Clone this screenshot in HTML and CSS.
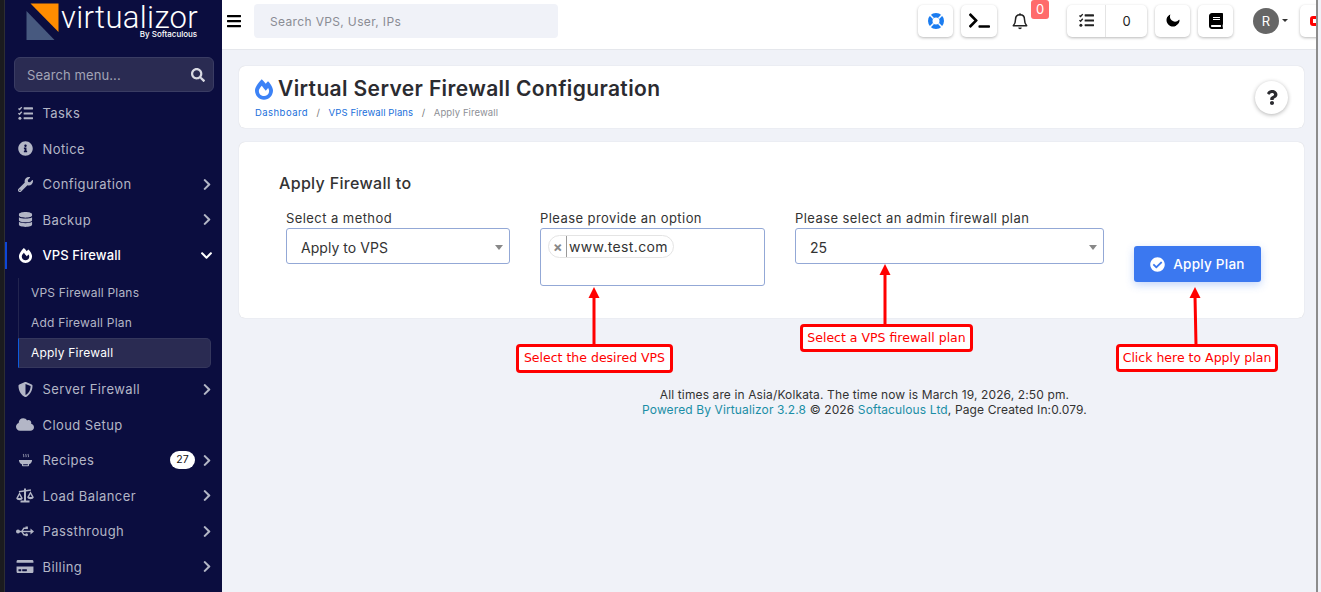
FILE: index.html
```html
<!DOCTYPE html>
<html lang="en">

<head>
    <meta charset="UTF-8">
    <meta name="viewport" content="width=device-width, initial-scale=1.0">
    <title>Virtual Server Firewall Configuration</title>
    <link rel="stylesheet" href="styles.css">
</head>

<body>
    <svg class="sprite" xmlns="http://www.w3.org/2000/svg">
        <symbol id="i-search" viewBox="0 0 512 512"><path d="M505 442.7L405.3 343c-4.5-4.5-10.6-7-17-7H372c27.6-35.3 44-79.7 44-128C416 93.1 322.9 0 208 0S0 93.1 0 208s93.1 208 208 208c48.3 0 92.7-16.4 128-44v16.3c0 6.4 2.5 12.5 7 17l99.7 99.7c9.4 9.4 24.6 9.4 33.9 0l28.3-28.3c9.4-9.4 9.4-24.6.1-34zM208 336c-70.7 0-128-57.2-128-128 0-70.7 57.2-128 128-128 70.7 0 128 57.2 128 128 0 70.7-57.2 128-128 128z"/></symbol>
        <symbol id="i-right" viewBox="0 0 320 512"><path d="M285.476 272.971L91.132 467.314c-9.373 9.373-24.569 9.373-33.941 0l-22.667-22.667c-9.357-9.357-9.375-24.522-.04-33.901L188.505 256 34.484 101.255c-9.335-9.379-9.317-24.544.04-33.901l22.667-22.667c9.373-9.373 24.569-9.373 33.941 0L285.475 239.03c9.373 9.372 9.373 24.568.001 33.941z"/></symbol>
        <symbol id="i-down" viewBox="0 0 448 512"><path d="M207.029 381.476L12.686 187.132c-9.373-9.373-9.373-24.569 0-33.941l22.667-22.667c9.357-9.357 24.522-9.375 33.901-.04L224 284.505l154.745-154.021c9.379-9.335 24.544-9.317 33.901.04l22.667 22.667c9.373 9.373 9.373 24.569 0 33.941L240.971 381.476c-9.373 9.372-24.569 9.372-33.942 0z"/></symbol>
        <symbol id="i-check" viewBox="0 0 512 512"><path d="M504 256c0 136.967-111.033 248-248 248S8 392.967 8 256 119.033 8 256 8s248 111.033 248 248zM227.314 387.314l184-184c6.248-6.248 6.248-16.379 0-22.627l-22.627-22.627c-6.248-6.249-16.379-6.249-22.628 0L216 308.118l-70.059-70.059c-6.248-6.248-16.379-6.248-22.628 0l-22.627 22.627c-6.248 6.248-6.248 16.379 0 22.627l104 104c6.249 6.249 16.379 6.249 22.628.001z"/></symbol>
        <symbol id="i-info" viewBox="0 0 512 512"><path d="M256 8C119.043 8 8 119.083 8 256c0 136.997 111.043 248 248 248s248-111.003 248-248C504 119.083 392.957 8 256 8zm0 110c23.196 0 42 18.804 42 42s-18.804 42-42 42-42-18.804-42-42 18.804-42 42-42zm56 254c0 6.627-5.373 12-12 12h-88c-6.627 0-12-5.373-12-12v-24c0-6.627 5.373-12 12-12h12v-64h-12c-6.627 0-12-5.373-12-12v-24c0-6.627 5.373-12 12-12h64c6.627 0 12 5.373 12 12v100h12c6.627 0 12 5.373 12 12v24z"/></symbol>
        <symbol id="i-wrench" viewBox="0 0 512 512"><path d="M507.73 109.1c-2.24-9.03-13.54-12.09-20.12-5.51l-74.36 74.36-67.88-11.31-11.31-67.88 74.36-74.36c6.62-6.62 3.43-17.9-5.66-20.16-47.38-11.74-99.55.91-136.58 37.93-39.64 39.64-50.55 97.1-34.05 147.2L18.74 402.76c-24.99 24.99-24.99 65.51 0 90.5 24.99 24.99 65.51 24.99 90.5 0l213.21-213.21c50.12 16.71 107.47 5.68 147.37-34.22 37.07-37.07 49.7-89.32 37.91-136.73zM64 472c-13.25 0-24-10.75-24-24 0-13.26 10.75-24 24-24s24 10.74 24 24c0 13.25-10.75 24-24 24z"/></symbol>
        <symbol id="i-database" viewBox="0 0 448 512"><path d="M448 73.143v45.714C448 159.143 347.667 192 224 192S0 159.143 0 118.857V73.143C0 32.857 100.333 0 224 0s224 32.857 224 73.143zM448 176v102.857C448 319.143 347.667 352 224 352S0 319.143 0 278.857V176c48.125 33.143 136.208 48.572 224 48.572S399.874 209.143 448 176zm0 160v102.857C448 479.143 347.667 512 224 512S0 479.143 0 438.857V336c48.125 33.143 136.208 48.572 224 48.572S399.874 369.143 448 336z"/></symbol>
        <symbol id="i-cloud" viewBox="0 0 640 512"><path d="M537.6 226.6c4.1-10.7 6.4-22.4 6.4-34.6 0-53-43-96-96-96-19.7 0-38.1 6-53.3 16.2C367 64.2 315.3 32 256 32c-88.4 0-160 71.6-160 160 0 2.7.1 5.4.2 8.1C40.2 219.8 0 273.2 0 336c0 79.5 64.5 144 144 144h368c70.7 0 128-57.3 128-128 0-61.9-44-113.6-102.4-125.4z"/></symbol>
        <symbol id="i-bars" viewBox="0 0 448 512"><path d="M16 132h416c8.837 0 16-7.163 16-16V76c0-8.837-7.163-16-16-16H16C7.163 60 0 67.163 0 76v40c0 8.837 7.163 16 16 16zm0 160h416c8.837 0 16-7.163 16-16v-40c0-8.837-7.163-16-16-16H16c-8.837 0-16 7.163-16 16v40c0 8.837 7.163 16 16 16zm0 160h416c8.837 0 16-7.163 16-16v-40c0-8.837-7.163-16-16-16H16c-8.837 0-16 7.163-16 16v40c0 8.837 7.163 16 16 16z"/></symbol>
        <symbol id="i-moon" viewBox="0 0 512 512"><path d="M283.211 512c78.962 0 151.079-35.925 198.857-94.792 7.068-8.708-.639-21.43-11.562-19.35-124.203 23.654-238.262-71.576-238.262-196.954 0-72.222 38.662-138.635 101.498-174.394 9.686-5.512 7.25-20.197-3.756-22.23A258.156 258.156 0 0 0 283.211 0c-141.309 0-256 114.511-256 256 0 141.309 114.511 256 256 256z"/></symbol>
        <symbol id="i-question" viewBox="0 0 384 512"><path d="M202.021 0C122.202 0 70.503 32.703 29.914 91.026c-7.363 10.58-5.093 25.086 5.178 32.874l43.138 32.709c10.373 7.865 25.132 6.026 33.253-4.148 25.049-31.381 43.63-49.449 82.757-49.449 30.764 0 68.816 19.799 68.816 49.631 0 22.552-18.617 34.134-48.993 51.164-35.423 19.86-82.299 44.576-82.299 106.405V320c0 13.255 10.745 24 24 24h72.471c13.255 0 24-10.745 24-24v-5.773c0-42.86 125.268-44.645 125.268-160.627C377.504 66.256 286.902 0 202.021 0zM192 373.459c-38.196 0-69.271 31.075-69.271 69.271 0 38.195 31.075 69.27 69.271 69.27s69.271-31.075 69.271-69.271-31.075-69.27-69.271-69.27z"/></symbol>
        <symbol id="i-book" viewBox="0 0 448 512"><path d="M448 360V24c0-13.3-10.7-24-24-24H96C43 0 0 43 0 96v320c0 53 43 96 96 96h328c13.3 0 24-10.7 24-24v-16c0-7.5-3.5-14.3-8.9-18.7-4.2-15.4-4.2-59.3 0-74.7 5.4-4.3 8.9-11.1 8.9-18.6zM128 134c0-3.3 2.7-6 6-6h212c3.3 0 6 2.7 6 6v20c0 3.3-2.7 6-6 6H134c-3.3 0-6-2.7-6-6v-20zm0 64c0-3.3 2.7-6 6-6h212c3.3 0 6 2.7 6 6v20c0 3.3-2.7 6-6 6H134c-3.3 0-6-2.7-6-6v-20zm253.4 250H96c-17.7 0-32-14.3-32-32 0-17.6 14.4-32 32-32h285.4c-1.9 17.1-1.9 46.9 0 64z"/></symbol>
        <symbol id="i-terminal" viewBox="0 0 640 512"><path d="M257.981 272.971L63.638 467.314c-9.373 9.373-24.569 9.373-33.941 0L7.029 444.647c-9.357-9.357-9.375-24.522-.04-33.901L161.011 256 6.99 101.255c-9.335-9.379-9.317-24.544.04-33.901l22.667-22.667c9.373-9.373 24.569-9.373 33.941 0l194.343 194.343c9.372 9.372 9.372 24.568 0 33.941zM640 456v-32c0-13.255-10.745-24-24-24H312c-13.255 0-24 10.745-24 24v32c0 13.255 10.745 24 24 24h304c13.255 0 24-10.745 24-24z"/></symbol>
        <symbol id="i-shield" viewBox="0 0 512 512"><path d="M466.5 83.7l-192-80a48.15 48.15 0 0 0-36.9 0l-192 80C27.7 91.1 16 108.6 16 128c0 198.5 114.5 335.7 221.5 380.3 11.8 4.9 25.1 4.9 36.9 0C360.1 472.6 496 349.3 496 128c0-19.4-11.7-36.9-29.5-44.3zM256.1 446.3l-.1-381 175.9 73.3c-3.3 151.4-82.1 261.1-175.8 307.7z"/></symbol>
        <symbol id="i-fire" viewBox="0 0 448 512"><path d="M323.56 51.2c-20.8 19.3-39.58 39.59-56.22 59.97C240.08 73.62 206.28 35.53 168 0 69.74 91.17 0 209.96 0 281.6 0 408.85 100.29 512 224 512s224-103.15 224-230.4c0-53.27-51.98-163.14-124.44-230.4zm-19.47 340.65C282.43 407.01 255.72 416 226.86 416 154.71 416 96 368.26 96 290.75c0-38.61 24.31-72.63 72.79-130.75 6.93 7.98 98.83 125.34 98.83 125.34l58.63-66.88c4.14 6.85 7.91 13.55 11.27 19.97 27.35 52.19 15.81 118.97-33.43 153.42z"/></symbol>
        <symbol id="i-card" viewBox="0 0 576 512"><path d="M0 432c0 26.5 21.5 48 48 48h480c26.5 0 48-21.5 48-48V256H0v176zm192-68c0-6.6 5.4-12 12-12h136c6.6 0 12 5.4 12 12v40c0 6.6-5.4 12-12 12H204c-6.6 0-12-5.4-12-12v-40zm-128 0c0-6.6 5.4-12 12-12h72c6.6 0 12 5.4 12 12v40c0 6.6-5.4 12-12 12H76c-6.6 0-12-5.4-12-12v-40zM576 80v48H0V80c0-26.5 21.5-48 48-48h480c26.5 0 48 21.5 48 48z"/></symbol>
        <symbol id="i-tasks" viewBox="0 0 16 16"><path d="M0.500 2.600l1.200 1.200 2.300-2.600" fill="none" stroke="currentColor" stroke-width="1.500"/><path d="M0.500 7.600l1.200 1.200 2.300-2.600" fill="none" stroke="currentColor" stroke-width="1.500"/><circle cx="2" cy="13" r="1.600"/><rect x="6" y="1.400" width="10" height="2.200" rx=".4"/><rect x="6" y="6.900" width="10" height="2.200" rx=".4"/><rect x="6" y="11.900" width="10" height="2.200" rx=".4"/></symbol>
        <symbol id="i-bowl" viewBox="0 0 16 16"><path d="M1 7.500h14c0 2.400-1.400 3.900-3.200 4.600v.9a1 1 0 0 1-1 1H5.200a1 1 0 0 1-1-1v-.9C2.400 11.400 1 9.900 1 7.500zM5.500 12v1h5v-1z" fill-rule="evenodd"/><path d="M6 1c-.8 1.200.8 1.800 0 3.400M8.500 1c-.8 1.200.8 1.800 0 3.400M11 1c-.8 1.200.8 1.800 0 3.400" fill="none" stroke="currentColor" stroke-width=".9"/></symbol>
        <symbol id="i-scale" viewBox="0 0 18 15"><path d="M8 .5h2v1.400l4.800-.6.2 1.400-5 .7V12.500h3.500V14.500H4.500V12.500H8V3.700L3 4.400l-.2-1.400L8 2.200z"/><path d="M3.500 4.300L.2 10.300c.3 1.300 1.700 2 3.300 2s3-.7 3.300-2zM3.500 7L2 10h3z" fill-rule="evenodd"/><path d="M14.500 3.300l-3.300 6c.3 1.300 1.700 2 3.300 2s3-.7 3.300-2zM14.500 6L13 9h3z" fill-rule="evenodd"/></symbol>
        <symbol id="i-usb" viewBox="0 0 18 12"><circle cx="2" cy="6" r="2"/><path d="M2 5.300h13v1.400H2z"/><path d="M14.500 3l3.500 3-3.500 3z"/><path d="M5 6l2.500-3.900H10v1.400H8.300L6.600 6l1.700 2.500h1.200v1.400H7.500z"/><rect x="9.500" y="1" width="2.400" height="2.600"/><circle cx="10.500" cy="9.200" r="1.500"/></symbol>
        <symbol id="i-lifering" viewBox="0 0 16 16"><path d="M8 0a8 8 0 1 0 0 16A8 8 0 0 0 8 0zm0 4.500a3.500 3.500 0 1 1 0 7 3.500 3.500 0 0 1 0-7z" fill-rule="evenodd"/><path d="M2.600 1.500l3.400 3.400-1.100 1.100L1.500 2.600zM13.400 1.500l1.100 1.100L11.100 6 10 4.900zM4.900 10L6 11.100 2.600 14.500 1.500 13.400zM11.100 10l3.400 3.400-1.100 1.100L10 11.100z" fill="#fff"/></symbol>
        <symbol id="i-bell" viewBox="0 0 16 18"><path d="M8 1.800c-2.800 0-4.500 2-4.500 4.600 0 3.300-.9 4.900-2.200 6.400h13.400c-1.300-1.500-2.200-3.100-2.200-6.400C12.500 3.800 10.800 1.800 8 1.800z" fill="none" stroke="currentColor" stroke-width="1.500" stroke-linejoin="round"/><path d="M7 .4h2v1.800H7zM6.200 14.400h3.600a1.800 1.800 0 0 1-3.600 0z"/></symbol>
    </svg>

    <div class="shell">
        <div class="win-strip"></div>

        <aside class="sidebar">
            <div class="logo">
                <svg class="logo-mark" viewBox="0 0 34 38">
                    <polygon points="4.500,0.500 32.500,0.500 32.500,29" fill="#ff8c00" />
                    <polygon points="0.500,8 28.500,37 0.500,37" fill="#47597f" />
                </svg>
                <div class="logo-text">
                    <span class="logo-name">virtualizor</span>
                    <span class="logo-by">By Softaculous</span>
                </div>
            </div>

            <div class="menu-search">
                <span>Search menu...</span>
                <svg class="ico-search"><use href="#i-search" /></svg>
            </div>

            <nav class="menu">
                <a class="menu-row"><svg class="ico"><use href="#i-tasks" /></svg>Tasks</a>
                <a class="menu-row"><svg class="ico"><use href="#i-info" /></svg>Notice</a>
                <a class="menu-row"><svg class="ico"><use href="#i-wrench" /></svg>Configuration<svg class="chev"><use href="#i-right" /></svg></a>
                <a class="menu-row"><svg class="ico"><use href="#i-database" /></svg>Backup<svg class="chev"><use href="#i-right" /></svg></a>
                <a class="menu-row open"><svg class="ico"><use href="#i-fire" /></svg>VPS Firewall<svg class="chev chev-down"><use href="#i-down" /></svg></a>
                <div class="submenu">
                    <a class="sub-row">VPS Firewall Plans</a>
                    <a class="sub-row">Add Firewall Plan</a>
                    <a class="sub-row current">Apply Firewall</a>
                </div>
                <a class="menu-row"><svg class="ico"><use href="#i-shield" /></svg>Server Firewall<svg class="chev"><use href="#i-right" /></svg></a>
                <a class="menu-row"><svg class="ico ico-wide"><use href="#i-cloud" /></svg>Cloud Setup</a>
                <a class="menu-row"><svg class="ico"><use href="#i-bowl" /></svg>Recipes<span class="count">27</span><svg class="chev"><use href="#i-right" /></svg></a>
                <a class="menu-row"><svg class="ico ico-wide"><use href="#i-scale" /></svg>Load Balancer<svg class="chev"><use href="#i-right" /></svg></a>
                <a class="menu-row"><svg class="ico ico-wide"><use href="#i-usb" /></svg>Passthrough<svg class="chev"><use href="#i-right" /></svg></a>
                <a class="menu-row"><svg class="ico ico-wide"><use href="#i-card" /></svg>Billing<svg class="chev"><use href="#i-right" /></svg></a>
            </nav>
        </aside>

        <div class="content">
            <header class="topbar">
                <svg class="burger"><use href="#i-bars" /></svg>
                <div class="top-search">Search VPS, User, IPs</div>
                <div class="top-actions">
                    <span class="tool tool-help"><svg><use href="#i-lifering" /></svg></span>
                    <span class="tool tool-term"><svg><use href="#i-terminal" /></svg></span>
                    <span class="bell"><svg><use href="#i-bell" /></svg><b class="bell-count">0</b></span>
                    <span class="tool-group">
                        <span class="tool-tasks"><svg><use href="#i-tasks" /></svg></span>
                        <span class="tool-num">0</span>
                    </span>
                    <span class="tool tool-moon"><svg><use href="#i-moon" /></svg></span>
                    <span class="tool tool-book"><svg><use href="#i-book" /></svg></span>
                    <span class="avatar">R</span>
                    <span class="caret"></span>
                    <span class="tool tool-power"><i></i></span>
                </div>
            </header>

            <main class="page">
                <section class="card page-head">
                    <div>
                        <h1><svg class="head-fire"><use href="#i-fire" /></svg>Virtual Server Firewall Configuration</h1>
                        <div class="crumbs">
                            <a class="crumb-home">Dashboard</a><span class="sep">/</span><a>VPS Firewall Plans</a><span class="sep">/</span><span class="crumb-now">Apply Firewall</span>
                        </div>
                    </div>
                    <span class="help-btn"><svg><use href="#i-question" /></svg></span>
                </section>

                <section class="card form-card">
                    <h2>Apply Firewall to</h2>
                    <div class="form-row">
                        <div class="field field-method">
                            <label>Select a method</label>
                            <div class="select">Apply to VPS<span class="arrow"></span></div>
                        </div>
                        <div class="field field-option">
                            <label>Please provide an option</label>
                            <div class="multi">
                                <span class="chip"><span class="chip-x">×</span><span class="chip-text">www.test.com</span></span>
                            </div>
                        </div>
                        <div class="field field-plan">
                            <label>Please select an admin firewall plan</label>
                            <div class="select">25<span class="arrow"></span></div>
                        </div>
                        <button type="button" class="apply-btn"><svg><use href="#i-check" /></svg>Apply Plan</button>
                    </div>
                </section>

                <footer class="page-foot">
                    <p>All times are in Asia/Kolkata. The time now is March 19, 2026, 2:50 pm.</p>
                    <p><a>Powered By Virtualizor 3.2.8</a> © 2026 <a>Softaculous Ltd</a>, Page Created In:0.079.</p>
                </footer>
            </main>
        </div>

        <div class="edge"></div>

        <!-- red annotations drawn over the screenshot -->
        <svg class="arrows" viewBox="0 0 1321 592">
            <path d="M594 345V296M885 325V273M1196 345L1195 296" fill="none" stroke="#f00" stroke-width="3" />
            <polygon points="594,287 588.500,298 599.500,298" fill="#f00" />
            <polygon points="885,264 879.500,275 890.500,275" fill="#f00" />
            <polygon points="1195,287 1189.500,298 1200.500,298" fill="#f00" />
        </svg>
        <div class="note note-vps">Select the desired VPS</div>
        <div class="note note-plan">Select a VPS firewall plan</div>
        <div class="note note-apply">Click here to Apply plan</div>
    </div>
</body>

</html>
```

FILE: styles.css
```css
* {
    box-sizing: border-box;
}

html,
body {
    margin: 0;
    padding: 0;
    height: 100%;
    overflow: hidden;
}

body {
    font-family: Inter, "Liberation Sans", sans-serif;
    color: #333;
    background-color: #f0f2f8;
}

.sprite {
    display: none;
}

svg {
    fill: currentColor;
}

.shell {
    position: relative;
    display: flex;
    width: 1321px;
    height: 592px;
    overflow: hidden;
}

.win-strip {
    width: 5px;
    flex-shrink: 0;
    background-color: #1b1b1f;
    border-right: 1px solid #2e2e33;
}

/* sidebar */
.sidebar {
    width: 217px;
    flex-shrink: 0;
    background-color: #0b0d3f;
    color: #b3b6c6;
}

.logo {
    display: flex;
    height: 57px;
    padding: 3px 0 0 21px;
}

.logo-mark {
    width: 34px;
    height: 38px;
}

.logo-text {
    display: flex;
    flex-direction: column;
    margin-left: 1px;
    margin-top: 3px;
    color: #fff;
}

.logo-name {
    font-family: Roboto, sans-serif;
    font-size: 31px;
    line-height: 24px;
    font-weight: 300;
    letter-spacing: 0.35px;
}

.logo-by {
    font-size: 8px;
    line-height: 8px;
    padding-right: 1px;
    text-align: right;
    font-weight: 500;
}

.menu-search {
    display: flex;
    align-items: center;
    justify-content: space-between;
    height: 35px;
    margin: 0 8px 0 9px;
    padding: 0 8px 0 12px;
    font-size: 13px;
    letter-spacing: 0.1px;
    color: #a2a4b6;
    background-color: #2a2b52;
    border: 1px solid #3a3c63;
    border-radius: 6px;
}

.ico-search {
    width: 14px;
    height: 14px;
    color: #d8d9e2;
}

.menu {
    margin-top: 3.5px;
}

.menu-row {
    display: flex;
    align-items: center;
    height: 35.5px;
    padding-left: 13px;
    font-size: 13px;
    letter-spacing: 0.42px;
}

.ico {
    width: 15px;
    height: 15px;
    margin-right: 9.5px;
    flex-shrink: 0;
}

.ico-wide {
    width: 18px;
    margin-left: -2px;
    margin-right: 8.5px;
}

.chev {
    width: 10px;
    height: 13px;
    margin-left: auto;
    margin-right: 10px;
}

.chev-down {
    width: 13px;
    margin-right: 9px;
}

.count + .chev {
    margin-left: 7px;
}

.count {
    margin-left: auto;
    width: 25px;
    height: 18px;
    font-size: 10.5px;
    line-height: 18px;
    letter-spacing: 0;
    text-align: center;
    color: #111;
    background-color: #fff;
    border-radius: 9px;
}

.open {
    color: #fff;
    font-weight: 500;
    letter-spacing: 0.1px;
    position: relative;
}

.open::before {
    content: "";
    position: absolute;
    left: 0;
    top: 4px;
    width: 2px;
    height: 27px;
    background-color: #0d47d9;
}

.submenu {
    margin: 4.5px 11px 4px 13px;
    border-left: 1px solid #22244f;
}

.sub-row {
    display: flex;
    align-items: center;
    height: 30px;
    padding-left: 12px;
    font-size: 12px;
    letter-spacing: 0.2px;
}

.current {
    color: #fff;
    background-color: #2a2b52;
    border: 1px solid #35375d;
    border-left: 1px solid #0d5be0;
    border-radius: 0 5px 5px 0;
    margin-left: -1px;
}

/* topbar */
.content {
    flex: 1;
    min-width: 0;
    overflow: hidden;
}

.topbar {
    display: flex;
    align-items: center;
    height: 50px;
    padding: 0 0 8px 5px;
    background-color: #fff;
    border-bottom: 1px solid #e5e7ec;
}

.burger {
    width: 14px;
    height: 16px;
    color: #000;
    flex-shrink: 0;
    margin-top: 1px;
}

.top-search {
    width: 304px;
    height: 34px;
    margin-left: 13px;
    padding-left: 16px;
    font-size: 12px;
    letter-spacing: 0.35px;
    line-height: 36px;
    color: #8a8c94;
    background-color: #f0f2f8;
    border-radius: 4px;
    flex-shrink: 0;
}

.top-actions {
    display: flex;
    align-items: center;
    margin-left: 360px;
    flex-shrink: 0;
}

.tool,
.tool-group {
    display: flex;
    align-items: center;
    justify-content: center;
    height: 32px;
    background-color: #fff;
    border-radius: 5px;
    box-shadow: 0 1px 3px rgba(0, 0, 0, 0.28);
}

.tool {
    width: 35px;
    color: #000;
}

.tool-help svg {
    width: 16px;
    height: 16px;
    color: #1a7cf0;
}

.tool-term {
    width: 36px;
    margin-left: 8px;
}

.tool-term svg {
    width: 21px;
    height: 17px;
}

.bell {
    position: relative;
    width: 70px;
    height: 32px;
    color: #222;
}

.bell svg {
    position: absolute;
    left: 15px;
    top: 8px;
    width: 16px;
    height: 18px;
}

.bell-count {
    position: absolute;
    left: 34px;
    top: -5px;
    width: 18px;
    height: 19px;
    font-size: 13px;
    font-weight: 400;
    line-height: 18px;
    text-align: center;
    color: #fff;
    background-color: #ff6b6b;
    border-radius: 3px;
}

.tool-group {
    width: 80px;
}

.tool-tasks {
    display: flex;
    align-items: center;
    justify-content: center;
    width: 39px;
    height: 100%;
    border-right: 1px solid #e4e4e4;
}

.tool-tasks svg {
    width: 17px;
    height: 15px;
    color: #222;
}

.tool-num {
    flex: 1;
    text-align: center;
    font-size: 13px;
    color: #222;
}

.tool-moon {
    margin-left: 8px;
}

.tool-moon svg {
    width: 13px;
    height: 13px;
    transform: rotate(-40deg);
}

.tool-book {
    margin-left: 8px;
}

.tool-book svg {
    width: 14px;
    height: 16px;
}

.avatar {
    width: 26px;
    height: 26px;
    margin-left: 20px;
    font-size: 13px;
    line-height: 26px;
    text-align: center;
    color: #fff;
    background-color: #666;
    border-radius: 50%;
}

.caret {
    width: 0;
    height: 0;
    margin-left: 3px;
    border-left: 3px solid transparent;
    border-right: 3px solid transparent;
    border-top: 3px solid #333;
}

.tool-power {
    justify-content: flex-start;
    margin-left: 12px;
    padding-left: 10px;
    flex-shrink: 0;
}

.tool-power i {
    display: block;
    width: 13px;
    height: 10px;
    border: 3px solid #f00;
    border-radius: 3px;
    background-color: #fff;
}

/* page */
.page {
    padding: 16px 12px 0 17px;
}

.card {
    background-color: #fff;
    border-radius: 6px;
    box-shadow: 0 0 1px rgba(0, 0, 0, 0.2);
}

.page-head {
    display: flex;
    justify-content: space-between;
    align-items: center;
    height: 62px;
    padding: 0 16px 0 16px;
}

h1 {
    display: flex;
    align-items: center;
    margin: -1px 0 0;
    font-size: 21px;
    line-height: 28px;
    font-weight: 600;
    letter-spacing: 0.37px;
    color: #2b2b30;
}

.head-fire {
    width: 18px;
    height: 21px;
    margin-right: 5px;
    color: #3c82f6;
}

.crumbs {
    margin-top: 4px;
    font-size: 9.5px;
    letter-spacing: 0.1px;
    color: #1a6fdb;
}

.crumb-home {
    letter-spacing: 0.45px;
}

.sep {
    margin: 0 8.5px;
    color: #777;
}

.crumb-now {
    color: #8d8f96;
}

.help-btn {
    display: flex;
    align-items: center;
    justify-content: center;
    width: 33px;
    height: 33px;
    background-color: #fff;
    border-radius: 50%;
    box-shadow: 0 1px 4px rgba(0, 0, 0, 0.3);
}

.help-btn svg {
    width: 12px;
    height: 15px;
    color: #2b2b30;
}

.form-card {
    height: 176px;
    margin-top: 14px;
    padding: 31px 43px 0 40px;
}

h2 {
    margin: 0;
    font-size: 16px;
    line-height: 20px;
    font-weight: 500;
    letter-spacing: 0.33px;
    color: #333;
}

.form-row {
    display: flex;
    align-items: flex-start;
    gap: 30px;
    margin-top: 16px;
    padding-left: 7px;
}

.field label {
    display: block;
    font-size: 13px;
    line-height: 19px;
    letter-spacing: 0.43px;
    color: #333;
}

.field-method {
    width: 224px;
}

.field-option {
    width: 225px;
}

.field-plan {
    width: 309px;
}

.select {
    position: relative;
    height: 36px;
    padding-left: 14px;
    font-size: 14px;
    letter-spacing: 0.05px;
    line-height: 37px;
    color: #333;
    background-color: #fff;
    border: 1px solid #93a8d6;
    border-radius: 3px;
}

.arrow {
    position: absolute;
    right: 6px;
    top: 16px;
    border-left: 4px solid transparent;
    border-right: 4px solid transparent;
    border-top: 5px solid #888;
}

.multi {
    height: 58px;
    padding: 6px 7px;
    background-color: #fff;
    border: 1px solid #93a8d6;
    border-radius: 3px;
}

.chip {
    display: inline-flex;
    align-items: center;
    height: 23px;
    border: 1px solid #e4e4e4;
    border-radius: 12px;
}

.chip-x {
    width: 18px;
    padding-left: 4px;
    font-size: 14px;
    font-weight: 700;
    line-height: 21px;
    color: #888;
    border-right: 1px solid #999;
}

.chip-text {
    padding: 0 5px 0 2px;
    font-size: 14px;
    letter-spacing: 0.35px;
    color: #333;
}

.apply-btn {
    display: flex;
    align-items: center;
    justify-content: center;
    width: 127px;
    height: 36px;
    margin-top: 37px;
    font-family: inherit;
    font-size: 13.5px;
    font-weight: 500;
    letter-spacing: 0.25px;
    color: #fff;
    background-color: #3b78f0;
    border: none;
    border-radius: 3px;
    box-shadow: 0 3px 8px rgba(59, 120, 240, 0.3);
}

.apply-btn svg {
    width: 15px;
    height: 15px;
    margin-right: 8px;
}

.page-foot {
    margin-top: 69px;
    padding-left: 186px;
    text-align: center;
    font-size: 12px;
    line-height: 15px;
    letter-spacing: 0.12px;
    color: #333;
}

.page-foot p {
    margin: 0;
}

.page-foot a {
    color: #1b8ea6;
}

.edge {
    width: 5px;
    flex-shrink: 0;
    background-color: #f0f2f8;
    border-left: 2px solid #8c8c8c;
}

/* annotations */
.arrows {
    position: absolute;
    left: 0;
    top: 0;
    width: 1321px;
    height: 592px;
    pointer-events: none;
}

.note {
    position: absolute;
    font-family: "DejaVu Sans", sans-serif;
    font-size: 12.5px;
    line-height: 22px;
    text-align: center;
    color: #f00;
    background-color: #fff;
    border: 3px solid #f00;
    border-radius: 4px;
}

.note-vps {
    left: 516px;
    top: 344px;
    width: 157px;
    height: 29px;
}

.note-plan {
    left: 800px;
    top: 324px;
    width: 173px;
    height: 28px;
}

.note-apply {
    left: 1116px;
    top: 344px;
    width: 162px;
    height: 28px;
}
```
